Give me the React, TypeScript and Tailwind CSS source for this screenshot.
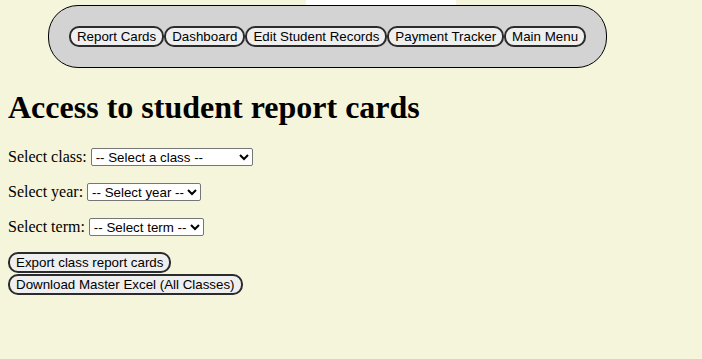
const navItems = [
  "Report Cards",
  "Dashboard",
  "Edit Student Records",
  "Payment Tracker",
  "Main Menu",
];

const btn =
  "shrink-0 whitespace-nowrap rounded-[10px] border-2 border-[#2b2b2b] bg-[#efefef] px-[6px] py-[1px] text-[13.33px] leading-[15px] text-black [font-family:'Liberation_Sans',Arial,sans-serif]";

const sel =
  "h-[18px] rounded-[2px] border border-[#767676] bg-white px-0 text-[13.33px] leading-[15px] text-black [font-family:'Liberation_Sans',Arial,sans-serif]";

export default function App() {
  return (
    <div className="min-h-[359px] bg-[#f5f5dc] text-black [font-family:'Liberation_Serif','Times_New_Roman',serif]">
      <div className="ml-[306px] h-[5px] w-[150px] bg-white" />
      <nav className="ml-[48px] flex h-[63px] w-[559px] items-center justify-center rounded-[30px] border border-black bg-[#d3d3d3]">
        {navItems.map((item) => (
          <button key={item} className={btn}>
            {item}
          </button>
        ))}
      </nav>

      <div className="px-[8px]">
        <h1 className="my-[21px] text-[32px] font-bold leading-[37px]">
          Access to student report cards
        </h1>

        <p className="my-4 flex items-center gap-[4px] text-[16px] leading-[19px]">
          Select class:
          <select className={`${sel} w-[162px]`}>
            <option>-- Select a class --</option>
          </select>
        </p>
        <p className="my-4 flex items-center gap-[4px] text-[16px] leading-[19px]">
          Select year:
          <select className={`${sel} w-[114px]`}>
            <option>-- Select year --</option>
          </select>
        </p>
        <p className="my-4 flex items-center gap-[4px] text-[16px] leading-[19px]">
          Select term:
          <select className={`${sel} w-[115px]`}>
            <option>-- Select term --</option>
          </select>
        </p>

        <div className="mt-[1px] flex flex-col items-start gap-[1px]">
          <button className={btn}>Export class report cards</button>
          <button className={btn}>Download Master Excel (All Classes)</button>
        </div>
      </div>
    </div>
  );
}
